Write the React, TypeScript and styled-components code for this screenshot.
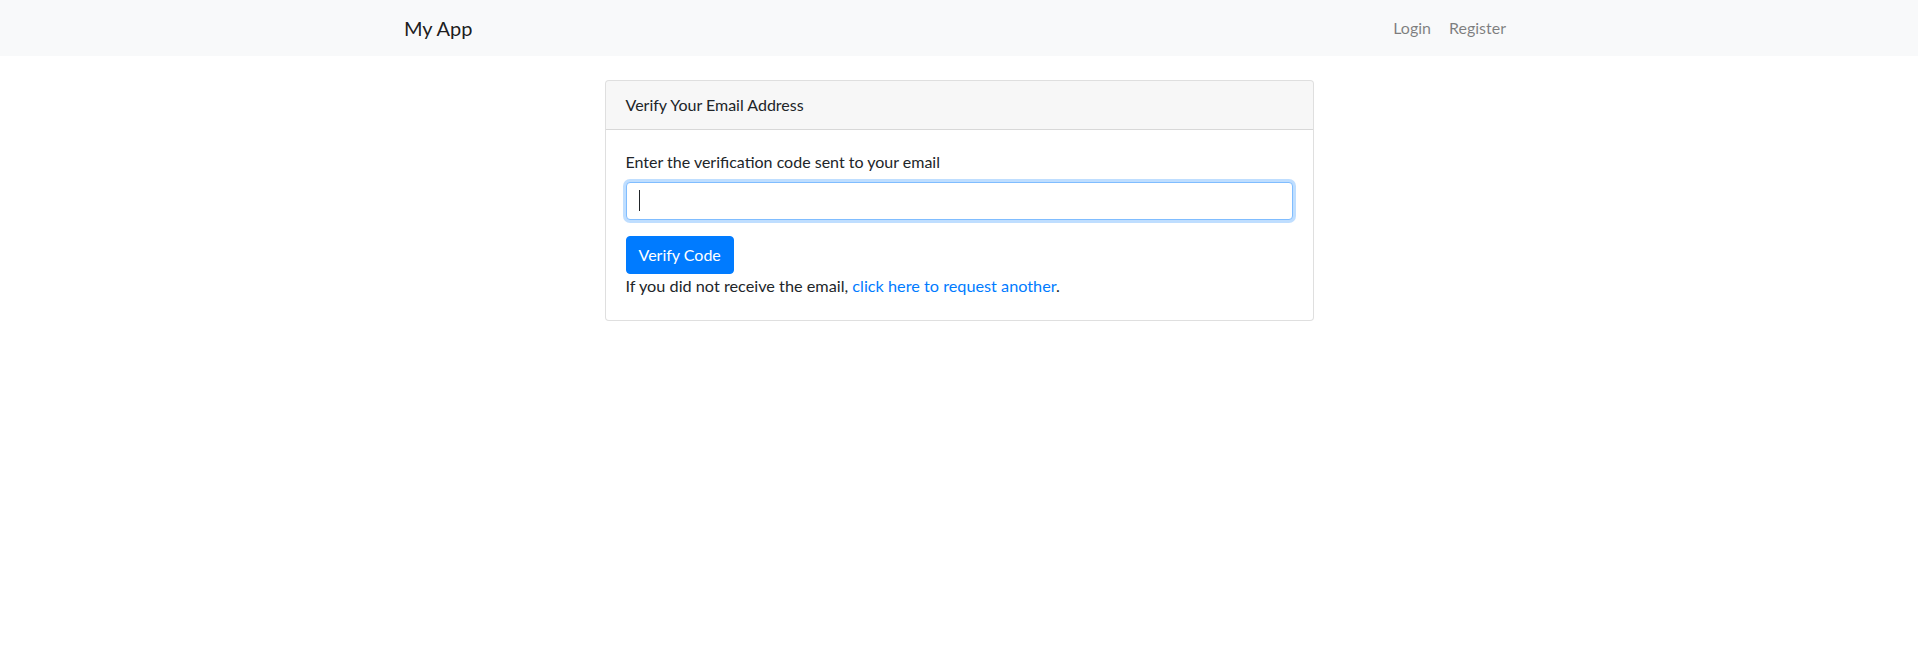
import styled, { createGlobalStyle } from "styled-components";

const GlobalStyle = createGlobalStyle`
  html, body {
    margin: 0;
    padding: 0;
    background: #fff;
  }
  body {
    font-family: Lato, "Noto Sans", "Liberation Sans", sans-serif;
    font-size: 16px;
    line-height: 1.5;
    color: #212529;
  }
  * {
    box-sizing: border-box;
  }
`;

const Navbar = styled.nav`
  background-color: #f8f9fa;
  height: 56px;
  padding: 8px 0;
`;

const Container = styled.div`
  max-width: 1140px;
  margin: 0 auto;
  padding: 0 15px;
  display: flex;
  align-items: center;
  justify-content: space-between;
  height: 100%;
`;

const Brand = styled.a`
  font-size: 20px;
  line-height: 30px;
  color: rgba(0, 0, 0, 0.9);
  text-decoration: none;
  padding: 5px 0;
`;

const NavLinks = styled.ul`
  display: flex;
  list-style: none;
  margin: 0;
  padding: 0;
  gap: 2px;
`;

const NavLink = styled.a`
  display: block;
  padding: 8px;
  color: rgba(0, 0, 0, 0.5);
  text-decoration: none;
`;

const Main = styled.main`
  padding: 24px 0;
`;

const Card = styled.div`
  width: 709px;
  margin: 0 auto;
  border: 1px solid rgba(0, 0, 0, 0.125);
  border-radius: 4px;
  background: #fff;
`;

const CardHeader = styled.div`
  padding: 12px 20px;
  background-color: rgba(0, 0, 0, 0.03);
  border-bottom: 1px solid rgba(0, 0, 0, 0.125);
  border-radius: 3px 3px 0 0;
`;

const CardBody = styled.div`
  padding: 20px;
`;

const FormGroup = styled.div`
  margin-bottom: 16px;
`;

const Label = styled.label`
  display: block;
  margin-bottom: 8px;
`;

const InputWrap = styled.div`
  position: relative;
`;

const Input = styled.input`
  display: block;
  width: 100%;
  height: 38px;
  padding: 6px 12px;
  font: inherit;
  color: #495057;
  background: #fff;
  border: 1px solid #80bdff;
  border-radius: 4px;
  outline: 0;
  box-shadow: 0 0 0 3px rgba(0, 123, 255, 0.25);
  caret-color: transparent;
`;

// static text cursor as seen in the focused field
const Caret = styled.span`
  position: absolute;
  left: 13px;
  top: 8px;
  width: 1px;
  height: 21px;
  background: #212529;
  pointer-events: none;
`;

const Button = styled.button`
  display: inline-block;
  height: 38px;
  padding: 6px 12px;
  font: inherit;
  color: #fff;
  background-color: #007bff;
  border: 1px solid #007bff;
  border-radius: 4px;
  cursor: pointer;
`;

const Note = styled.div`
  font-size: 16.25px;
  padding-bottom: 2px;
`;

const Link = styled.a`
  color: #007bff;
  text-decoration: none;
`;

export default function App() {
  return (
    <>
      <GlobalStyle />
      <Navbar>
        <Container>
          <Brand href="#">My App</Brand>
          <NavLinks>
            <li>
              <NavLink href="#">Login</NavLink>
            </li>
            <li>
              <NavLink href="#">Register</NavLink>
            </li>
          </NavLinks>
        </Container>
      </Navbar>
      <Main>
        <Card>
          <CardHeader>Verify Your Email Address</CardHeader>
          <CardBody>
            <form onSubmit={(e) => e.preventDefault()}>
              <FormGroup>
                <Label htmlFor="code">
                  Enter the verification code sent to your email
                </Label>
                <InputWrap>
                  <Input id="code" type="text" autoFocus />
                  <Caret />
                </InputWrap>
              </FormGroup>
              <Button type="submit">Verify Code</Button>
            </form>
            <Note>
              If you did not receive the email,{" "}
              <Link href="#">click here to request another</Link>.
            </Note>
          </CardBody>
        </Card>
      </Main>
    </>
  );
}
